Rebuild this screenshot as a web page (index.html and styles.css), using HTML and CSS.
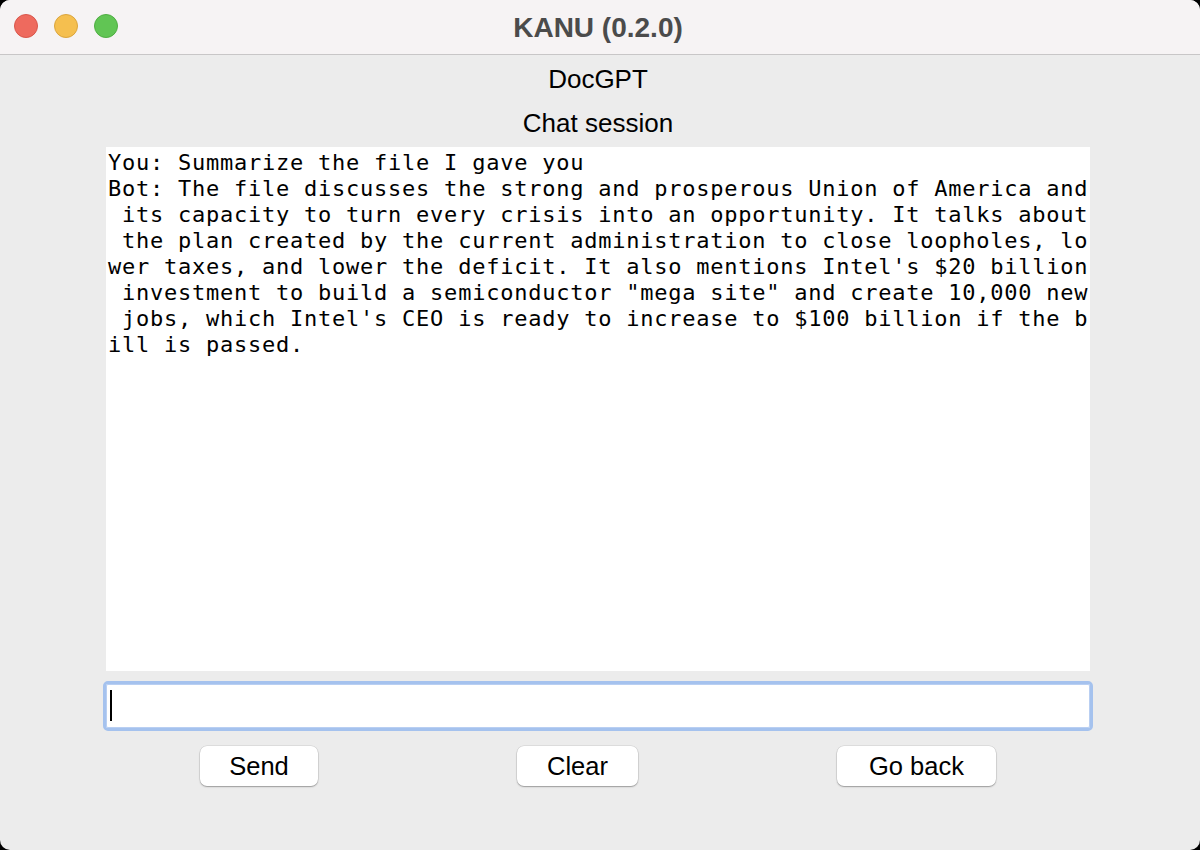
FILE: index.html
```html
<!DOCTYPE html>
<html>
<head>
<meta charset="utf-8">
<title>KANU (0.2.0)</title>
<link rel="stylesheet" href="styles.css">
</head>
<body>
<div class="window">
  <header class="titlebar">
    <div class="lights">
      <span class="light red"></span>
      <span class="light yellow"></span>
      <span class="light green"></span>
    </div>
    <div class="title">KANU (0.2.0)</div>
    <div class="spacer"></div>
  </header>
  <main class="content">
    <div class="label first">DocGPT</div>
    <div class="label second">Chat session</div>
    <div class="chat"><pre class="log">You: Summarize the file I gave you
Bot: The file discusses the strong and prosperous Union of America and
 its capacity to turn every crisis into an opportunity. It talks about
 the plan created by the current administration to close loopholes, lo
wer taxes, and lower the deficit. It also mentions Intel's $20 billion
 investment to build a semiconductor "mega site" and create 10,000 new
 jobs, which Intel's CEO is ready to increase to $100 billion if the b
ill is passed.</pre></div>
    <div class="entry"><span class="caret"></span></div>
    <div class="buttons">
      <button class="btn send">Send</button>
      <button class="btn clear">Clear</button>
      <button class="btn back">Go back</button>
    </div>
  </main>
</div>
</body>
</html>
```
FILE: styles.css
```css
* { box-sizing: border-box; }
html, body { margin: 0; padding: 0; }
body {
  background: #000;
  width: 1200px;
  height: 850px;
  overflow: hidden;
  font-family: "Liberation Sans", Arial, sans-serif;
}
.window {
  width: 1200px;
  height: 850px;
  border-radius: 10px;
  overflow: hidden;
  background: #ececec;
}
.titlebar {
  height: 55px;
  background: #f6f3f4;
  border-bottom: 1px solid #c8c6c7;
  display: grid;
  grid-template-columns: 1fr auto 1fr;
  align-items: start;
}
.lights {
  display: flex;
  gap: 16px;
  padding: 14px 0 0 14px;
}
.light {
  width: 24px;
  height: 24px;
  border-radius: 50%;
  display: block;
}
.red { background: #ee6a5e; border: 1px solid #d9564b; }
.yellow { background: #f5bf4f; border: 1px solid #dba53d; }
.green { background: #61c554; border: 1px solid #4fae42; }
.title {
  font-weight: bold;
  font-size: 28px;
  line-height: 51px;
  padding-top: 2px;
  color: #4b4b4b;
  margin-left: -4px;
}
.content {
  padding-left: 106px;
  width: 1090px;
}
.label {
  font-size: 26px;
  line-height: 40px;
  text-align: center;
  color: #000;
}
.label.first { margin-top: 4px; }
.label.second { margin-top: 4px; }
.chat {
  margin-top: 4px;
  background: #fff;
  height: 524px;
  padding: 3px 0 0 2px;
  overflow: hidden;
}
.log {
  margin: 0;
  font-family: "DejaVu Sans Mono", monospace;
  font-size: 22px;
  letter-spacing: 0.76px;
  line-height: 26px;
  color: #000;
  white-space: pre;
}
.entry {
  margin: 10px -3px 0 -3px;
  height: 50px;
  background: #fff;
  border: 3px solid #a5c2ee;
  border-radius: 5px;
  padding: 6px 0 0 4px;
  box-shadow: inset 0 0 0 1px #b9cff2;
}
.caret {
  display: block;
  width: 2px;
  height: 31px;
  background: #000;
}
.buttons {
  display: flex;
  gap: 199px;
  margin-top: 15px;
  padding-left: 94px;
}
.btn {
  height: 40px;
  border: none;
  border-radius: 7px;
  background: #fff;
  font-family: "Liberation Sans", Arial, sans-serif;
  font-size: 25.5px;
  color: #000;
  padding: 0;
  box-shadow: 0 0 0 0.5px rgba(0,0,0,0.12), 0 1px 1.5px rgba(0,0,0,0.3);
}
.send { width: 118px; }
.clear { width: 121px; }
.back { width: 159px; }
```
